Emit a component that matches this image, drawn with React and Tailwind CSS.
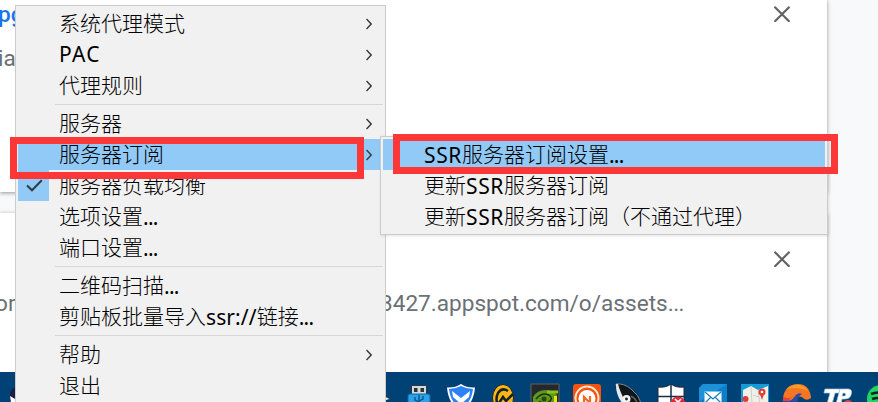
import React from "react";

const menuFont = "font-['Noto_Sans','Noto_Sans_CJK_SC',sans-serif] text-[21px] leading-[31px] text-black whitespace-nowrap";

function Close() {
  return (
    <svg width="16" height="16" viewBox="0 0 16 16" fill="none" stroke="#5f6368" strokeWidth="2.1">
      <path d="M.5.8 15.500 15.800M15.500.8.5 15.800" />
    </svg>
  );
}

function Arrow() {
  return (
    <svg className="mr-[11px] shrink-0" width="6" height="12" viewBox="0 0 6 12" fill="none" stroke="#3c3c3c" strokeWidth="1.5">
      <path d="M.5 1 5.2 6 .5 11" />
    </svg>
  );
}

function trackingFor(part) {
  if (part === "...") return "tracking-[-0.7px]";
  if (part === "PAC") return "tracking-[1.3px]";
  if (part === "ssr://") return "tracking-[0.1px]";
  if (/^[A-Za-z]/.test(part)) return "tracking-[0.6px]";
  return "relative -top-px font-['Noto_Sans_CJK_SC',sans-serif] font-light";
}

function Label({ text }) {
  const parts = text.split(/(\.\.\.|[A-Za-z:/]+)/).filter(Boolean);
  return (
    <div>
      {parts.map((part, i) => (
        <span key={i} className={trackingFor(part)}>{part}</span>
      ))}
    </div>
  );
}

function Row({ text, arrow, active, checked }) {
  return (
    <div className={`flex h-[31px] shrink-0 items-center ${active ? "bg-[#91c9f7]" : ""}`}>
      <div className={`flex h-[31px] w-[31px] shrink-0 items-center justify-center ${checked ? "bg-[#91c9f7]" : ""}`}>
        {checked && (
          <svg className="ml-[2px]" width="17" height="13" viewBox="0 0 17 13" fill="none" stroke="#2f3b45" strokeWidth="2">
            <path d="M1 6.500 6 11.300 15.800 1.200" />
          </svg>
        )}
      </div>
      <div className="h-[31px] flex-1 pl-[10px]">
        <Label text={text} />
      </div>
      {arrow && <Arrow />}
    </div>
  );
}

function Separator() {
  return (
    <div className="h-[7px] shrink-0 pt-[3px] pl-[37px]">
      <div className="h-px bg-[#d7d7d7]" />
    </div>
  );
}

function TrayIcon({ children }) {
  return (
    <svg className="shrink-0" width="42" height="30" viewBox="0 0 42 30" fill="none">
      {children}
    </svg>
  );
}

function Taskbar() {
  return (
    <div className="flex h-[30px] overflow-hidden bg-[#004275] pl-[398px]">
      <TrayIcon>
        <path d="M13.500 13.500h15v9h-15z" fill="#d3d8dc" stroke="#2b3640" />
        <path d="M16 16h3.500v4H16zM22.500 16H26v4h-3.500z" fill="#29333b" />
        <path d="M10 24q0-2 2-2h18q2 0 2 2v8H10z" fill="#2ba2e9" stroke="#12649b" />
        <path d="M21 23v8M17 25v3l4 2M25 24v3l-4 2" stroke="#075388" strokeWidth="1.300" />
      </TrayIcon>
      <TrayIcon>
        <path d="M21 12q6 4 14 3.500Q34 27 28 34H14Q8 27 7 15.500 15 16 21 12Z" fill="#fff" />
        <path d="M21 14q6 3 12 3-1 9-6 15H15q-5-6-6-15 6 0 12-3Z" fill="#2f82f5" />
        <path d="m12 19 9 7 9-7-1 6-8 7-8-7Z" fill="#fff" />
      </TrayIcon>
      <TrayIcon>
        <ellipse cx="21" cy="26" rx="10.500" ry="13.500" fill="#fdb713" stroke="#152432" />
        <path d="M26 19q-6-4-10 2-3 6 0 12M17 31l4-6 3 4 7-7" stroke="#15202b" strokeWidth="2.500" />
      </TrayIcon>
      <TrayIcon>
        <path d="M7 12h28v20H7z" fill="#25282d" stroke="#5d6265" />
        <path d="M9 25q4-7 13-7 6 0 11 5v10H9Z" fill="#5d991b" />
        <path d="M12 27q6-7 13-4 4 3 1 6-5 5-11 0" stroke="#1e320d" strokeWidth="1.500" />
        <circle cx="20" cy="27" r="2.500" fill="#284912" />
        <path d="M23 18.500h11v3H23z" fill="#8bc21d" /><path d="M30 24h3v6h-3z" fill="#f4e400" />
      </TrayIcon>
      <TrayIcon>
        <rect x="7" y="12" width="28" height="26" rx="3" fill="#f4530b" />
        <circle cx="21" cy="26" r="11.500" stroke="#ffe4d4" strokeWidth="2" />
        <circle cx="21" cy="26.500" r="8.500" fill="#fff" />
        <path d="M18 32v-7l6 6v-7" stroke="#f36a25" strokeWidth="2.200" />
      </TrayIcon>
      <TrayIcon>
        <path d="M8 12q8-1 15 5 8 6 10 14H17Q9 22 8 12Z" fill="#10151a" stroke="#7f878b" />
        <path d="M8 13q0-2 2-1 2 8 8 19h-4Q8 23 8 13Z" fill="#e8e8e8" />
        <circle cx="18.500" cy="27" r="4" fill="#f5f5f5" /><circle cx="18.500" cy="27" r="1.400" fill="#222" />
        <path d="M23 24q4 2 6 6" stroke="#5a6064" strokeWidth="1.500" />
      </TrayIcon>
      <TrayIcon>
        <path d="M21 12q5 4 13 3v17H8V15q8 1 13-3Z" fill="#fff" stroke="#202b33" />
        <path d="M21 12v20M8 24.500h26" stroke="#142f46" strokeWidth="1.500" />
        <circle cx="28" cy="32" r="7.500" fill="#e4283b" />
        <path d="m25 27 6 6m0-6-6 6" stroke="#fff" strokeWidth="1.600" />
      </TrayIcon>
      <TrayIcon>
        <path d="M11 12h24v20H7V16Z" fill="#0c7fc8" />
        <path d="M7 16 11 12h24L7 30Z" fill="#1c91d7" />
        <path d="M12.500 19.500h17V32h-17z" fill="#fff" />
        <path d="m13 20 8 7 8-7M13 31l6-6M29 31l-6-6" stroke="#147fc1" strokeWidth="1.200" />
      </TrayIcon>
      <TrayIcon>
        <path d="M7 12h28v20H7z" fill="#159bd5" />
        <path d="m9 18 8-4 7 4 10-4v18H9Z" fill="#f2efe9" />
        <path d="m17 14 1 18M24 18l2 14M19 23l6 2" stroke="#c7d1c4" />
        <circle cx="28" cy="20" r="3.500" fill="#df3b37" /><path d="M26 22h4l-2 6Z" fill="#df3b37" />
        <circle cx="11.500" cy="27" r="3" fill="#df3b37" /><circle cx="28" cy="20" r="1.300" fill="#fff" />
      </TrayIcon>
      <TrayIcon>
        <path d="M7 32V26Q9 12 22 12q11 0 13 13v1q-5 4-9-1-5-2-6 3l-3 4Z" fill="#f57624" />
        <path d="M11 17q6-5 13-4 6 2 8 6-9-5-21-2Z" fill="#f89b2b" />
        <path d="M7 28q8 3 12-4 3-4 7-2-4 2-4 6l-2 4H7Z" fill="#3048a0" />
        <path d="M7 24q4 4 9 1l-4 4H7Z" fill="#ed3d38" />
      </TrayIcon>
      <TrayIcon>
        <path d="M7 17h15l-1 4h-4l-3 11H9l3-11H6Z" fill="#fff" stroke="#adc5d8" strokeWidth=".7" />
        <path d="M22 17h8q5 0 3 6-1 4-6 4h-3l-1 5h-5Zm3 4-1 3h3q2-3-2-3Z" fill="#fff" stroke="#adc5d8" strokeWidth=".7" />
        <circle cx="30" cy="33" r="5" fill="#d84552" />
      </TrayIcon>
      <TrayIcon>
        <circle cx="21" cy="27" r="14" fill="#1ed760" />
        <path d="M11 22q10-4 20 2M12 27q9-3 17 2" stroke="#12212a" strokeWidth="2.500" />
      </TrayIcon>
    </div>
  );
}

function Page() {
  return (
    <div className="flex h-[402px] flex-col bg-[#f8f9fb]">
      <div className="flex h-[372px] flex-col gap-[21px] overflow-hidden font-[Roboto,sans-serif] text-[22.6px] leading-[26px] text-[#6b7075]">
        <div className="flex h-[192px] w-[827px] shrink-0 justify-between bg-white pt-[6px] pr-[37px] shadow-[0_1px_4px_rgba(60,64,67,0.55)]">
          <div className="flex flex-col gap-[18px]">
            <div className="-mt-[4px] -ml-[2px] font-medium text-[#1a73e8]">pg</div>
            <div className="-ml-[2px]">ia</div>
          </div>
          <Close />
        </div>
        <div className="flex h-[180px] w-[827px] shrink-0 flex-col bg-white pt-[38px] shadow-[0_1px_4px_rgba(60,64,67,0.55)]">
          <div className="flex justify-end pr-[37px]"><Close /></div>
          <div className="mt-[24px] flex">
            <span className="-ml-[5px] w-[385px]">or</span>
            <span>3427.appspot.com/o/assets<span className="tracking-[-0.5px]">...</span></span>
          </div>
        </div>
      </div>
      <Taskbar />
    </div>
  );
}

export default function App() {
  return (
    <div className="relative h-[402px] w-[878px] overflow-hidden">
      <Page />
      <div className="absolute top-[387px] left-[10px] h-[15px] w-[8px] rounded-l-full bg-[#17204a]" />
      <svg className="absolute top-[395px] left-[384px]" width="7" height="7" viewBox="0 0 7 7"><path d="M0 1 6 4 0 6Z" fill="#fff" stroke="#222" strokeWidth=".5" /></svg>
      <svg className="absolute top-[396px] left-[10px]" width="6" height="6" viewBox="0 0 6 6"><path d="M0 0 5 3V6H1Z" fill="#fff" /></svg>
      <div className={`absolute top-[5px] left-[15px] flex h-[420px] w-[371px] flex-col border border-[#cccccc] bg-[#f1f1f1] p-[2px] ${menuFont}`}>
        <Row text="系统代理模式" arrow />
        <Row text="PAC" arrow />
        <Row text="代理规则" arrow />
        <Separator />
        <Row text="服务器" arrow />
        <Row text="服务器订阅" arrow active />
        <Row text="服务器负载均衡" checked />
        <Row text="选项设置..." />
        <Row text="端口设置..." />
        <Separator />
        <Row text="二维码扫描..." />
        <Row text="剪贴板批量导入ssr://链接..." />
        <Separator />
        <Row text="帮助" arrow />
        <Row text="退出" />
      </div>
      <div className={`absolute top-[136px] left-[380px] flex w-[448px] flex-col border border-[#cccccc] bg-[#f1f1f1] p-[2px] shadow-[1px_1px_3px_rgba(0,0,0,0.12)] ${menuFont}`}>
        <Row text="SSR服务器订阅设置..." active />
        <Row text="更新SSR服务器订阅" />
        <Row text="更新SSR服务器订阅（不通过代理）" />
      </div>
      <div className="absolute top-[137px] left-[10px] h-[42px] w-[354px] border-7 border-[#fc3737]" />
      <div className="absolute top-[134px] left-[393px] h-[40px] w-[445px] border-7 border-[#fc3737]" />
    </div>
  );
}
